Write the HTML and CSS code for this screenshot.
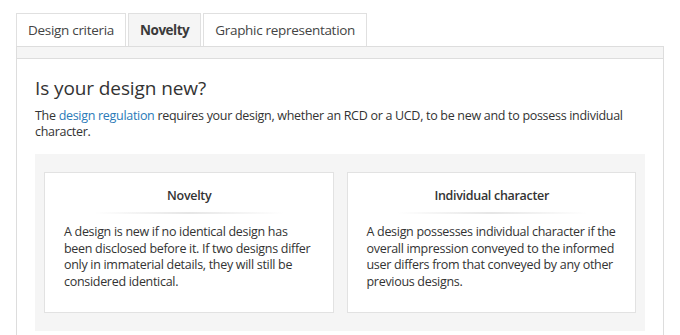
FILE: index.html
```html
<!DOCTYPE html>
<html lang="en">
<head>
<meta charset="utf-8">
<title>Novelty</title>
<link rel="stylesheet" href="styles.css">
</head>
<body>
<div class="tabs">
  <div class="tab">Design criteria</div>
  <div class="tab active">Novelty</div>
  <div class="tab">Graphic representation</div>
</div>
<div class="panel">
  <div class="strip"></div>
  <div class="content">
    <h2 class="heading">Is your design new?</h2>
    <p class="intro">The <a class="link" href="#">design regulation</a> requires your design, whether an RCD or a UCD, to be new and to possess individual character.</p>
    <div class="box">
      <div class="card">
        <h3 class="card-title">Novelty</h3>
        <div class="rule"></div>
        <p class="card-text">A design is new if no identical design has been disclosed before it. If two designs differ only in immaterial details, they will still be considered identical.</p>
      </div>
      <div class="card">
        <h3 class="card-title">Individual character</h3>
        <div class="rule"></div>
        <p class="card-text">A design possesses individual character if the overall impression conveyed to the informed user differs from that conveyed by any other previous designs.</p>
      </div>
    </div>
  </div>
</div>
</body>
</html>
```

FILE: styles.css
```css
* { box-sizing: border-box; }
html, body { margin: 0; padding: 0; background: #fff; }
body {
  font-family: "Open Sans", "Liberation Sans", sans-serif;
  color: #333;
  font-size: 12.5px;
  letter-spacing: -0.3px;
}
.tabs {
  display: flex;
  gap: 2px;
  padding: 13px 0 0 16px;
}
.tab {
  height: 33px;
  padding: 0 11px;
  border: 1px solid #e0e0e0;
  border-bottom: none;
  display: flex;
  align-items: center;
  font-size: 13.5px;
  color: #444;
  background: #fff;
}
.tab.active {
  background: #f5f5f5;
  font-weight: 700;
  letter-spacing: -0.5px;
  color: #3a3a3a;
}
.panel {
  margin: 0 16px;
  border: 1px solid #ddd;
  border-bottom: none;
  height: 290px;
}
.strip {
  height: 12px;
  background: #f5f5f5;
  border-bottom: 1px solid #ddd;
}
.content {
  padding: 18px 18px 0 18px;
}
.heading {
  margin: 0;
  font-size: 19px;
  line-height: 22px;
  font-weight: 400;
  letter-spacing: -0.1px;
  color: #333;
}
.intro {
  margin: 9px 0 0 0;
  line-height: 16px;
  color: #333;
}
.link { color: #2a7ab8; text-decoration: none; }
.box {
  margin-top: 14px;
  background: #f5f5f5;
  padding: 18px 9px;
  display: flex;
  gap: 13px;
}
.card {
  flex: 1;
  background: #fff;
  border: 1px solid #e2e2e2;
  padding: 14px 18px 22px 19px;
}
.card-title {
  margin: 0;
  text-align: center;
  font-size: 12.5px;
  line-height: 18px;
  font-weight: 600;
  color: #333;
}
.rule {
  height: 2px;
  margin: 7px auto 10px;
  width: 190px;
  background: linear-gradient(to right, rgba(230,230,230,0), #e6e6e6 50%, rgba(230,230,230,0));
}
.card-text {
  margin: 0;
  line-height: 16.5px;
  color: #333;
}
```
